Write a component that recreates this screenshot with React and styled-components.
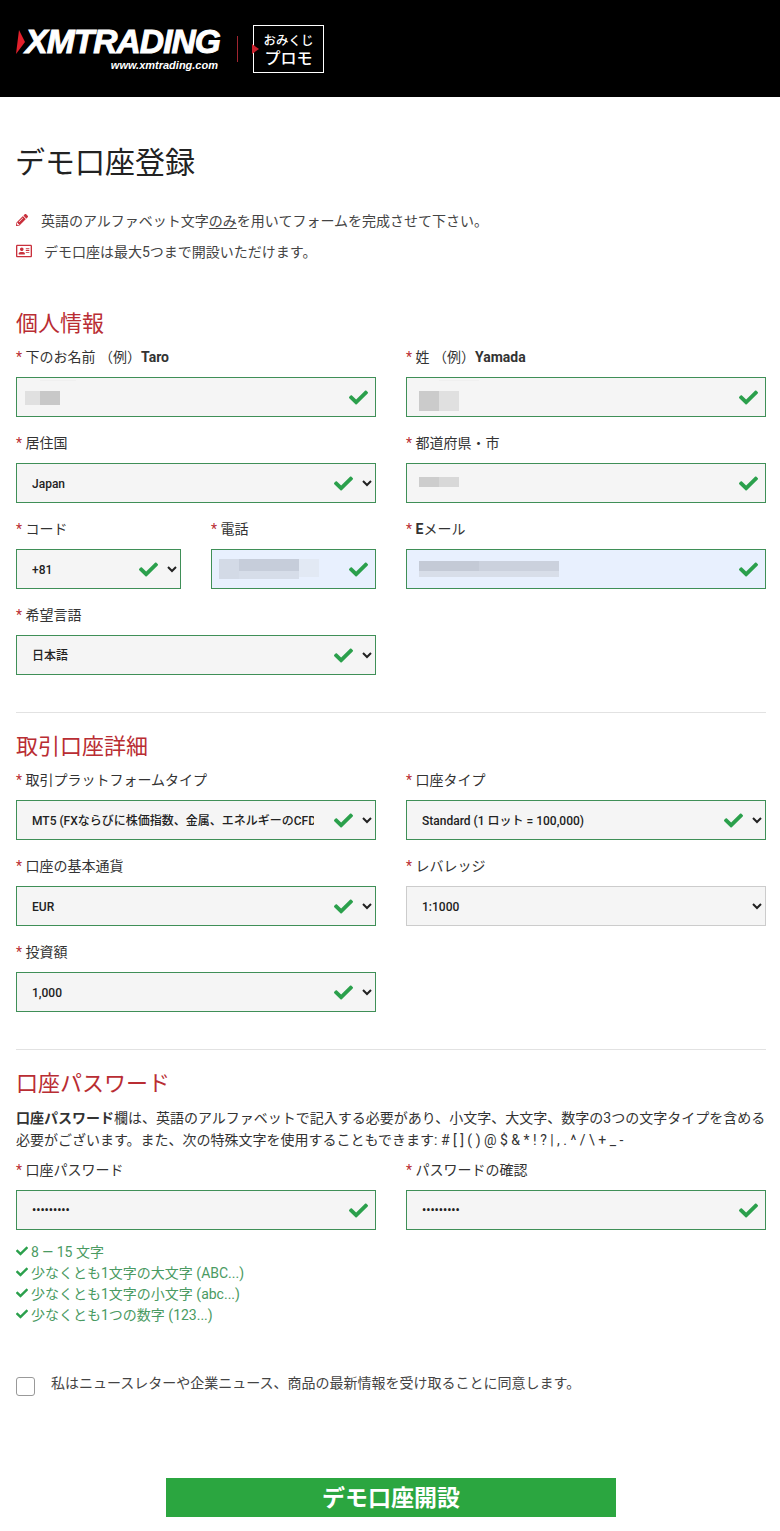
import React from "react";
import styled, { createGlobalStyle } from "styled-components";
import { FaCheck, FaPencilAlt, FaRegAddressCard } from "react-icons/fa";

const GlobalStyle = createGlobalStyle`
  html, body {
    margin: 0;
    padding: 0;
    background: #fff;
    color: #333;
    font-family: Roboto, "Noto Sans CJK JP", sans-serif;
  }
`;

const Header = styled.header`
  height: 97px;
  background: #000;
  display: flex;
  align-items: center;
  padding: 0 0 0 16px;
  box-sizing: border-box;
`;

const Logo = styled.div`
  position: relative;
  width: 205px;
  height: 42px;
  margin-top: -1px;
  color: #fff;
  font-family: "Liberation Sans", sans-serif;
  font-style: italic;
  font-weight: 700;
  text-align: right;
`;

const LogoMark = styled.span`
  position: absolute;
  left: 0;
  top: 3px;
  width: 9px;
  height: 24px;
  background: #e1202c;
  clip-path: polygon(3px 0, 100% 50%, 0 100%);
`;

const LogoName = styled.div`
  font-size: 33.5px;
  line-height: 30px;
  letter-spacing: -0.9px;
  font-weight: 700;
  white-space: nowrap;
  -webkit-text-stroke: 1px #fff;
  padding-right: 1px;
`;

const LogoUrl = styled.div`
  font-size: 11px;
  line-height: 14px;
  padding-right: 3px;
  margin-top: 1px;
  white-space: nowrap;
`;

const HeaderRule = styled.span`
  width: 1px;
  height: 26px;
  background: #a02530;
  margin: 0 15px 0 16px;
`;

const PromoBox = styled.div`
  position: relative;
  width: 71px;
  height: 48px;
  box-sizing: border-box;
  border: 1px solid #fff;
  color: #fff;
  text-align: center;
  padding: 6px 0 0 0;
  font-size: 12.5px;
  font-weight: 500;
  line-height: 17px;

  strong {
    display: block;
    font-size: 16px;
    line-height: 19px;
    font-weight: 500;
  }

  &::before {
    content: "";
    position: absolute;
    left: -2px;
    top: 18px;
    border-left: 7px solid #c9202c;
    border-top: 5px solid transparent;
    border-bottom: 5px solid transparent;
  }
`;

const Main = styled.main`
  padding: 0 14px 14px 16px;
`;

const Title = styled.h1`
  margin: 46px 0 0 -1px;
  font-size: 30px;
  line-height: 40px;
  font-weight: 400;
  color: #222;
`;

const Notes = styled.div`
  margin-top: 21px;
  margin-bottom: 43px;
`;

const Note = styled.p`
  margin: 0;
  height: 31px;
  display: flex;
  align-items: center;
  font-size: 14px;
  color: #444;

  svg {
    color: #c9303c;
    flex: none;
    margin-right: ${(p) => p.$gap}px;
  }

  u {
    text-underline-offset: 2px;
  }
`;

const SectionTitle = styled.h2`
  margin: 0 0 8px;
  font-size: 22px;
  line-height: 30px;
  font-weight: 400;
  color: #b92d33;
`;

const FieldGrid = styled.div`
  display: grid;
  grid-template-columns: 360px 360px;
  column-gap: 30px;
`;

const SplitCell = styled.div`
  display: grid;
  grid-template-columns: 165px 165px;
  column-gap: 30px;
`;

const Field = styled.div`
  margin-bottom: 16px;
  min-width: 0;
`;

const Label = styled.label`
  display: block;
  height: 20px;
  margin-bottom: 10px;
  font-size: 14px;
  line-height: 20px;
  color: #333;
  white-space: nowrap;

  b {
    font-weight: 700;
  }

  &::before {
    content: "* ";
    color: #b92d33;
  }
`;

const Control = styled.div`
  position: relative;
  height: 40px;

  > svg {
    position: absolute;
    top: 11px;
    right: ${(p) => (p.$select ? 23 : 8)}px;
    color: #2ba04c;
  }
`;

const fieldStyle = (p) => `
  display: block;
  width: 100%;
  height: 40px;
  box-sizing: border-box;
  border: 1px solid ${p.$plain ? "#ccc" : "#3f8f57"};
  border-radius: 0;
  outline: none;
  background-color: ${p.$autofill ? "#e8f0fe" : "#f5f5f5"};
  color: #222;
  font-family: Roboto, "Noto Sans CJK JP", sans-serif;
  font-size: 12px;
  font-weight: 500;
`;

const TextInput = styled.input`
  ${fieldStyle}
  padding: 0 15px;
`;

const Select = styled.select`
  ${fieldStyle}
  padding: 2px 45px 0 11px;
`;

/* privacy blur over the values typed into the reference */
const Smear = styled.span`
  position: absolute;
  left: ${(p) => p.$left}px;
  top: ${(p) => p.$top}px;
  width: ${(p) => p.$width}px;
  height: ${(p) => p.$height}px;
  background: ${(p) => p.$tone};
  filter: blur(0.6px);
`;

const Divider = styled.hr`
  border: 0;
  border-top: 1px solid #e2e2e2;
  margin: 21px 0 19px;
  width: 750px;
`;

const PasswordHelp = styled.p`
  margin: 6px 0 9px;
  font-size: 14px;
  line-height: 22px;
  color: #333;
  white-space: nowrap;

  b {
    font-weight: 700;
  }
`;

const Rules = styled.ul`
  list-style: none;
  margin: -6px 0 0;
  padding: 0;
`;

const Rule = styled.li`
  display: flex;
  align-items: center;
  height: 21px;
  font-size: 14px;
  color: #4a9a62;

  svg {
    color: #2ba04c;
    margin-right: 3px;
    flex: none;
  }
`;

const Consent = styled.label`
  display: flex;
  align-items: flex-start;
  margin-top: 49px;
  font-size: 14px;
  line-height: 20px;
  color: #444;
`;

const CheckBox = styled.span`
  width: 17px;
  height: 17px;
  border: 1px solid #999;
  border-radius: 3px;
  background: #fff;
  margin: 4px 16px 0 0;
  flex: none;
`;

const SubmitRow = styled.div`
  display: flex;
  justify-content: center;
  margin-top: 82px;
`;

const SubmitButton = styled.button`
  width: 450px;
  height: 39px;
  border: 0;
  background: #2ba640;
  color: #fff;
  font-family: Roboto, "Noto Sans CJK JP", sans-serif;
  font-size: 23px;
  font-weight: 700;
  padding: 0 0 4px;
`;

const Check = () => <FaCheck size={19} />;

const blocks = {
  first: [
    [9, 14, 15, 14, "#e0e0e0"],
    [24, 14, 20, 14, "#c8c8c8"],
    [24, 3, 36, 1, "#f0f0f0"],
  ],
  last: [
    [13, 14, 20, 20, "#cbcbcb"],
    [33, 14, 20, 20, "#e0e0e0"],
    [33, 3, 40, 1, "#f0f0f0"],
  ],
  city: [
    [13, 14, 20, 10, "#cdcdcd"],
    [33, 14, 20, 10, "#d8d8d8"],
  ],
  tel: [
    [8, 10, 20, 20, "#d3dae6"],
    [28, 10, 60, 12, "#c6cdda"],
    [28, 22, 60, 8, "#d6dde9"],
    [88, 10, 20, 18, "#e2e9f4"],
  ],
  mail: [
    [13, 12, 60, 10, "#c4cad6"],
    [73, 12, 80, 10, "#cbd1dd"],
    [13, 22, 140, 6, "#d8dee9"],
  ],
};

const TextField = ({ label, blur, autofill, value = "", type = "text" }) => (
  <Field>
    <Label>{label}</Label>
    <Control>
      <TextInput type={type} defaultValue={value} $autofill={autofill} />
      {blur &&
        blocks[blur].map(([left, top, width, height, tone]) => (
          <Smear key={left + "-" + top} $left={left} $top={top} $width={width} $height={height} $tone={tone} />
        ))}
      <Check />
    </Control>
  </Field>
);

const SelectField = ({ label, value, plain }) => (
  <Field>
    <Label>{label}</Label>
    <Control $select>
      <Select defaultValue={value} $plain={plain}>
        <option>{value}</option>
      </Select>
      {!plain && <Check />}
    </Control>
  </Field>
);

export default function App() {
  return (
    <>
      <GlobalStyle />
      <Header>
        <Logo>
          <LogoMark />
          <LogoName>XMTRADING</LogoName>
          <LogoUrl>www.xmtrading.com</LogoUrl>
        </Logo>
        <HeaderRule />
        <PromoBox>
          おみくじ
          <strong>プロモ</strong>
        </PromoBox>
      </Header>
      <Main>
        <Title>デモ口座登録</Title>
        <Notes>
          <Note $gap={13}>
            <FaPencilAlt size={12} />
            <span>
              英語のアルファベット文字<u>のみ</u>を用いてフォームを完成させて下さい。
            </span>
          </Note>
          <Note $gap={12}>
            <FaRegAddressCard size={16} />
            <span>デモ口座は最大5つまで開設いただけます。</span>
          </Note>
        </Notes>

        <SectionTitle>個人情報</SectionTitle>
        <FieldGrid>
          <TextField label={<>下のお名前 （例）<b>Taro</b></>} blur="first" />
          <TextField label={<>姓 （例）<b>Yamada</b></>} blur="last" />
          <SelectField label="居住国" value="Japan" />
          <TextField label="都道府県・市" blur="city" />
          <SplitCell>
            <SelectField label="コード" value="+81" />
            <TextField label="電話" blur="tel" autofill />
          </SplitCell>
          <TextField label={<><b>E</b>メール</>} blur="mail" autofill />
          <SelectField label="希望言語" value="日本語" />
        </FieldGrid>
        <Divider />

        <SectionTitle>取引口座詳細</SectionTitle>
        <FieldGrid>
          <SelectField label="取引プラットフォームタイプ" value="MT5 (FXならびに株価指数、金属、エネルギーのCFD)" />
          <SelectField label="口座タイプ" value="Standard (1 ロット = 100,000)" />
          <SelectField label="口座の基本通貨" value="EUR" />
          <SelectField label="レバレッジ" value="1:1000" plain />
          <SelectField label="投資額" value="1,000" />
        </FieldGrid>
        <Divider />

        <SectionTitle>口座パスワード</SectionTitle>
        <PasswordHelp>
          <b>口座パスワード</b>欄は、英語のアルファベットで記入する必要があり、小文字、大文字、数字の3つの文字タイプを含める
          <br />
          必要がございます。また、次の特殊文字を使用することもできます: # [ ] ( ) @ $ &amp; * ! ? | , . ^ / \ + _ -
        </PasswordHelp>
        <FieldGrid>
          <TextField label="口座パスワード" type="password" value="password1" />
          <TextField label="パスワードの確認" type="password" value="password1" />
        </FieldGrid>
        <Rules>
          <Rule><FaCheck size={12} />8 — 15 文字</Rule>
          <Rule><FaCheck size={12} />少なくとも1文字の大文字 (ABC...)</Rule>
          <Rule><FaCheck size={12} />少なくとも1文字の小文字 (abc...)</Rule>
          <Rule><FaCheck size={12} />少なくとも1つの数字 (123...)</Rule>
        </Rules>
        <Consent>
          <CheckBox />
          私はニュースレターや企業ニュース、商品の最新情報を受け取ることに同意します。
        </Consent>
        <SubmitRow>
          <SubmitButton>デモ口座開設</SubmitButton>
        </SubmitRow>
      </Main>
    </>
  );
}
